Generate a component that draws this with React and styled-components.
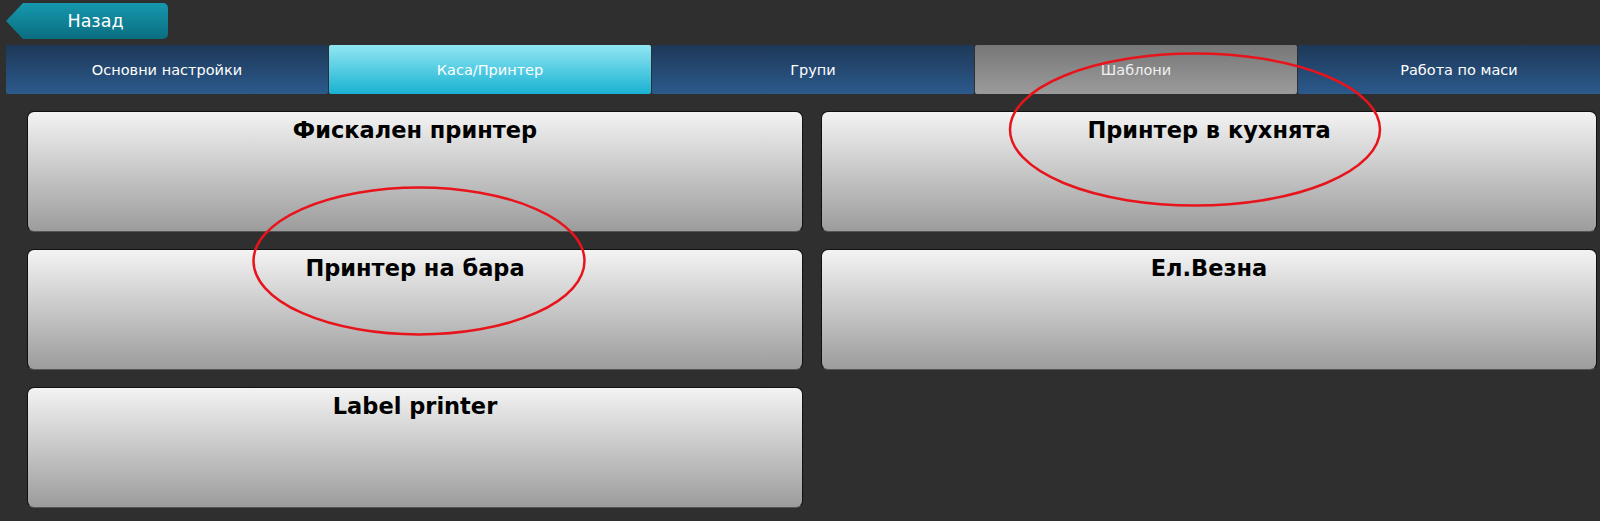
import styled, { createGlobalStyle } from "styled-components";

const GlobalStyle = createGlobalStyle`
  html, body {
    margin: 0;
    padding: 0;
    background: #2f2f2f;
    font-family: "DejaVu Sans", Verdana, sans-serif;
  }
`;

const Page = styled.div`
  position: relative;
  width: 1600px;
  height: 521px;
  overflow: hidden;
  background: #2f2f2f;
`;

const TopBar = styled.div`
  display: flex;
  padding: 3px 0 0 6px;
  height: 42px;
  box-sizing: border-box;
`;

const BackButton = styled.button`
  width: 162px;
  height: 36px;
  border: none;
  border-radius: 0 5px 5px 0;
  padding: 0 0 0 17px;
  background: linear-gradient(#1698ae, #0b6d80);
  clip-path: polygon(0 50%, 17px 0, 100% 0, 100% 100%, 17px 100%);
  color: #fff;
  font-family: "DejaVu Sans", Verdana, sans-serif;
  font-size: 17.5px;
  cursor: pointer;
`;

const TabBar = styled.div`
  display: flex;
  gap: 1px;
  margin: 3px 0 0 6px;
  height: 49px;
  overflow: hidden;
`;

const tabBg = {
  normal: "linear-gradient(#1e3858, #2b5a8c)",
  active: "linear-gradient(#91e6f3, #19b2d2)",
  muted: "linear-gradient(#777777, #9b9b9b)",
};

const Tab = styled.div`
  flex: 0 0 322px;
  display: flex;
  align-items: center;
  justify-content: center;
  border-radius: 2px;
  background: ${(p) => tabBg[p.$variant || "normal"]};
  color: ${(p) => (p.$variant === "muted" ? "#f0f0f0" : "#fff")};
  font-size: 14.5px;
  padding-top: 1px;
  box-sizing: border-box;
`;

const Grid = styled.div`
  display: grid;
  grid-template-columns: 776px 776px;
  grid-auto-rows: 121px;
  column-gap: 18px;
  row-gap: 17px;
  padding: 17px 0 0 27px;
`;

const Card = styled.div`
  border: 1px solid #111;
  border-bottom-color: #555;
  border-radius: 7px;
  background: linear-gradient(#f3f3f3, #9c9c9c);
  text-align: center;
  box-sizing: border-box;
  cursor: pointer;
`;

const CardTitle = styled.h3`
  margin: 4px 0 0;
  font-family: "DejaVu Sans", Verdana, sans-serif;
  font-weight: bold;
  font-size: 22.5px;
  line-height: 28px;
  color: #000;
`;

const Marks = styled.svg`
  position: absolute;
  left: 0;
  top: 0;
  pointer-events: none;
`;

const tabs = [
  { label: "Основни настройки" },
  { label: "Каса/Принтер", variant: "active" },
  { label: "Групи" },
  { label: "Шаблони", variant: "muted" },
  { label: "Работа по маси" },
];

const devices = [
  "Фискален принтер",
  "Принтер в кухнята",
  "Принтер на бара",
  "Ел.Везна",
  "Label printer",
];

export default function App() {
  return (
    <Page>
      <GlobalStyle />
      <TopBar>
        <BackButton>Назад</BackButton>
      </TopBar>
      <TabBar>
        {tabs.map((t) => (
          <Tab key={t.label} $variant={t.variant}>
            {t.label}
          </Tab>
        ))}
      </TabBar>
      <Grid>
        {devices.map((d) => (
          <Card key={d}>
            <CardTitle>{d}</CardTitle>
          </Card>
        ))}
      </Grid>
      <Marks width="1600" height="521">
        <ellipse cx="1195" cy="129.5" rx="185" ry="76" fill="none" stroke="#e8141c" strokeWidth="2.5" />
        <ellipse cx="419" cy="261" rx="165.5" ry="73.5" fill="none" stroke="#e8141c" strokeWidth="2.5" />
      </Marks>
    </Page>
  );
}
